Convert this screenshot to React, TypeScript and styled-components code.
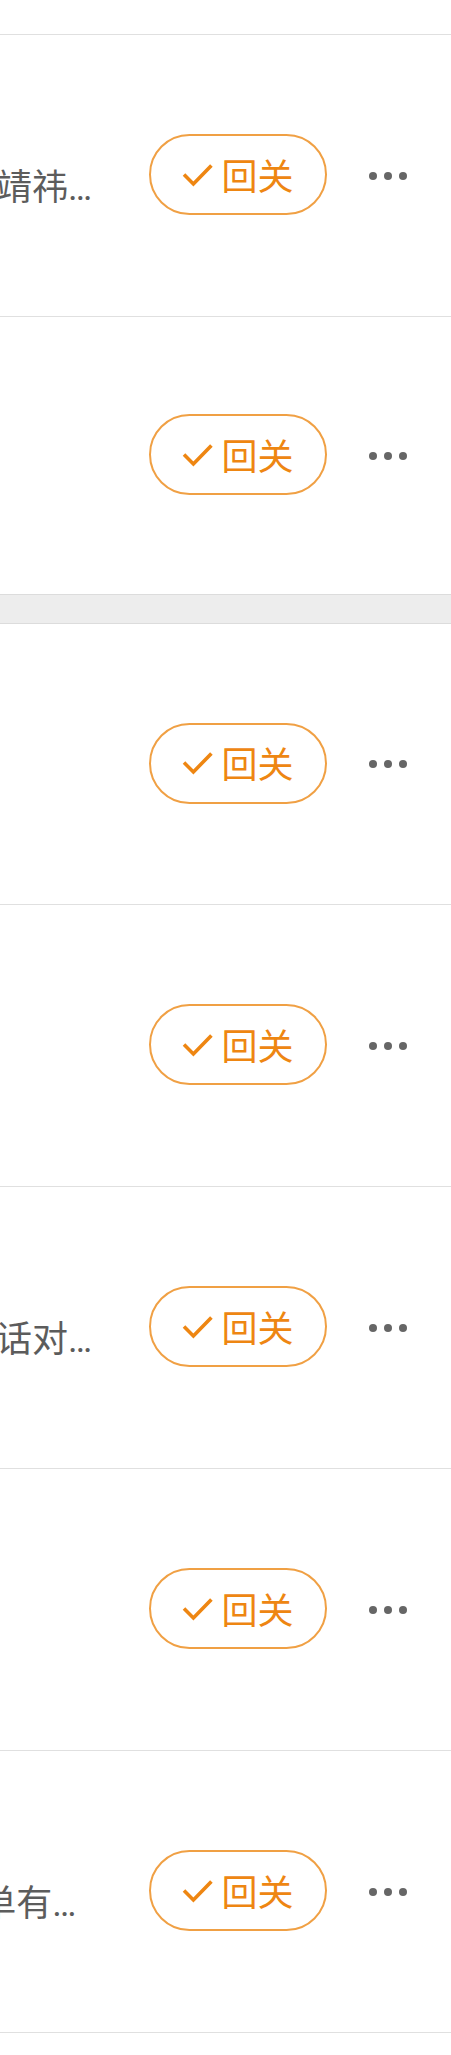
import React from "react";
import styled, { createGlobalStyle } from "styled-components";

const GlobalStyle = createGlobalStyle`
  html, body {
    margin: 0;
    padding: 0;
    background: #ffffff;
  }
  body {
    width: 451px;
    overflow-x: hidden;
    font-family: Roboto, "Noto Sans CJK SC", sans-serif;
  }
`;

const Page = styled.div`
  width: 451px;
  overflow: hidden;
  background: #ffffff;
`;

const TopStub = styled.div`
  height: 34px;
  border-bottom: 1px solid #e0e0e0;
`;

const SectionGap = styled.div`
  height: 28px;
  background: #ededed;
  border-top: 1px solid #dcdcdc;
  border-bottom: 1px solid #dcdcdc;
`;

const Row = styled.div<{ $h: number; $last?: boolean }>`
  display: flex;
  align-items: center;
  height: ${(p) => p.$h}px;
  border-bottom: ${(p) => (p.$last ? "none" : "1px solid #e0e0e0")};
`;

const NameCell = styled.div`
  flex: none;
  width: 400px;
  margin-left: -292px;
  padding-top: 26px;
  font-size: 36px;
  line-height: 43px;
  color: #5c5c5c;
  white-space: nowrap;
  overflow: hidden;
  text-overflow: ellipsis;
`;

const FollowButton = styled.button`
  flex: none;
  box-sizing: border-box;
  width: 178px;
  height: 81px;
  margin-left: 41px;
  margin-top: -2px;
  padding: 0;
  display: flex;
  align-items: center;
  justify-content: center;
  gap: 8px;
  border: 2px solid #f0a044;
  border-radius: 41px;
  background: #ffffff;
  color: #ee8612;
  font-family: "Noto Sans CJK SC", sans-serif;
  font-size: 36px;
  line-height: 1;
`;

const ButtonLabel = styled.span`
  display: block;
  margin-top: -2px;
`;

const More = styled.div`
  flex: none;
  margin-left: 42px;
  display: flex;
  gap: 7px;
`;

const Dot = styled.span`
  width: 8px;
  height: 8px;
  border-radius: 50%;
  background: #666666;
`;

function CheckIcon() {
  return (
    <svg width="31" height="24" viewBox="0 0 31 24" fill="none">
      <path
        d="M2 11.6 L11.4 21 L29.4 2.4"
        stroke="#ee8612"
        strokeWidth="3.6"
        strokeLinejoin="miter"
      />
    </svg>
  );
}

type Friend = { id: number; name: string; h: number; last?: boolean };

const firstGroup: Friend[] = [
  { id: 1, name: "阳光下奔跑的少年靖祎小朋友", h: 281 },
  { id: 2, name: "", h: 277, last: true },
];

const secondGroup: Friend[] = [
  { id: 3, name: "", h: 280 },
  { id: 4, name: "", h: 281 },
  { id: 5, name: "今天也要好好地说话对自己好", h: 281 },
  { id: 6, name: "", h: 281 },
  { id: 7, name: "爱吃小鱼的猫咪5单有点甜", h: 281 },
];

function FriendRow({ friend }: { friend: Friend }) {
  return (
    <Row $h={friend.h} $last={friend.last}>
      <NameCell>{friend.name}</NameCell>
      <FollowButton>
        <CheckIcon />
        <ButtonLabel>回关</ButtonLabel>
      </FollowButton>
      <More>
        <Dot />
        <Dot />
        <Dot />
      </More>
    </Row>
  );
}

export default function App() {
  return (
    <Page>
      <GlobalStyle />
      <TopStub />
      {firstGroup.map((f) => (
        <FriendRow key={f.id} friend={f} />
      ))}
      <SectionGap />
      {secondGroup.map((f) => (
        <FriendRow key={f.id} friend={f} />
      ))}
    </Page>
  );
}
